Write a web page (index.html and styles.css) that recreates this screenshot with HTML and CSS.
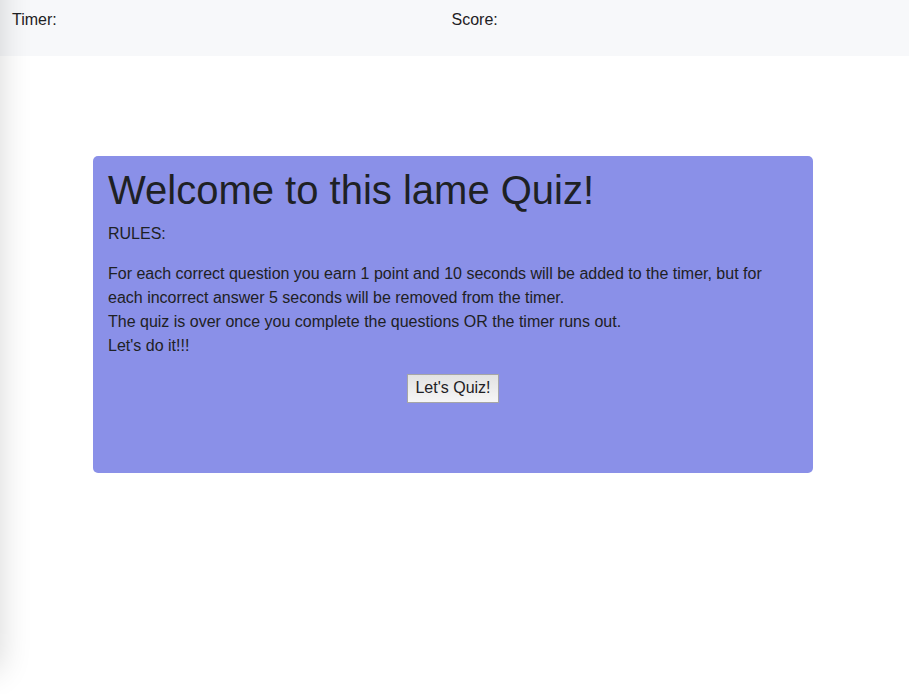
FILE: index.html
```html
<!DOCTYPE html>
<html lang="en">
<head>
<meta charset="utf-8">
<title>Quiz</title>
<link rel="stylesheet" href="styles.css">
</head>
<body>
<header class="status-bar">
  <p class="status">Timer:</p>
  <p class="status">Score:</p>
</header>
<main class="page">
  <section class="quiz-card">
    <h1 class="title">Welcome to this lame Quiz!</h1>
    <p class="rules-label">RULES:</p>
    <p class="rules">For each correct question you earn 1 point and 10 seconds will be added to the timer, but for each incorrect answer 5 seconds will be removed from the timer.<br>The quiz is over once you complete the questions OR the timer runs out.<br>Let's do it!!!</p>
    <button class="start" type="button">Let's Quiz!</button>
  </section>
</main>
</body>
</html>
```

FILE: styles.css
```css
* {
  box-sizing: border-box;
}

body {
  margin: 0;
  min-height: 100vh;
  background: #fff;
  color: #1e2124;
  font: 16px/24px "Liberation Sans", Arial, sans-serif;
}

/* Soft shade along the left edge of the window */
body::before {
  content: "";
  position: fixed;
  top: -40px;
  bottom: 24px;
  left: -40px;
  width: 40px;
  box-shadow: 0 0 32px rgba(0, 0, 0, 0.16);
  pointer-events: none;
}

.status-bar {
  display: grid;
  grid-template-columns: 1fr 1fr;
  padding: 8px 18px 24px 12px;
  background: #f7f8fa;
}

.status {
  margin: 0;
}

.page {
  padding: 100px 96px 0 93px;
}

.quiz-card {
  padding: 10px 15px 70px;
  border-radius: 5px;
  background: #8a90e8;
}

.title {
  margin: 0 0 8px;
  font-size: 40px;
  font-weight: 400;
  line-height: 48px;
}

.rules-label,
.rules {
  margin: 0 0 16px;
}

.start {
  display: block;
  margin: 0 auto;
  padding: 1px 7px 2px;
  border: 1px solid #a6a6a6;
  background: linear-gradient(#e2e2e2, #f6f6f6);
  color: inherit;
  font: inherit;
}
```
